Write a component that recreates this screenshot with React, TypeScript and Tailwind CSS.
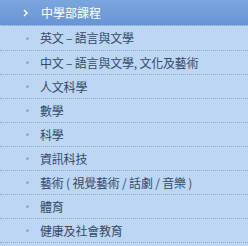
const items = [
  '英文 – 語言與文學',
  '中文 – 語言與文學, 文化及藝術',
  '人文科學',
  '數學',
  '科學',
  '資訊科技',
  '藝術 ( 視覺藝術 / 話劇 / 音樂 )',
  '體育',
  '健康及社會教育',
]

export default function App() {
  return (
    <div className="w-[248px] h-[246px] overflow-hidden bg-[#bdd6f3] font-['Noto_Sans_CJK_TC','Noto_Sans',sans-serif]">
      <div className="h-[26px] flex items-center bg-gradient-to-b from-[#7ba6dd] to-[#6895d3] border-b border-dotted border-[#a8c5ea] text-white text-[12px]">
        <svg width="5" height="8" viewBox="0 0 5 8" className="ml-[23px]">
          <path d="M1 1 L4 4 L1 7" fill="none" stroke="#ffffff" strokeWidth="1.4" />
        </svg>
        <span className="ml-[13px] leading-none">中學部課程</span>
      </div>
      {items.map((t, i) => (
        <div
          key={t}
          className={`${i === 0 ? 'h-[25px]' : 'h-[24px]'} flex items-center border-b border-dotted border-[#8ea8cc] text-[12px] text-[#354a6c]`}
        >
          <span className="ml-[26px] w-[3px] h-[3px] rounded-full bg-[#98acc9]" />
          <span className="ml-[11px] leading-none tracking-[-0.2px]">{t}</span>
        </div>
      ))}
    </div>
  )
}
